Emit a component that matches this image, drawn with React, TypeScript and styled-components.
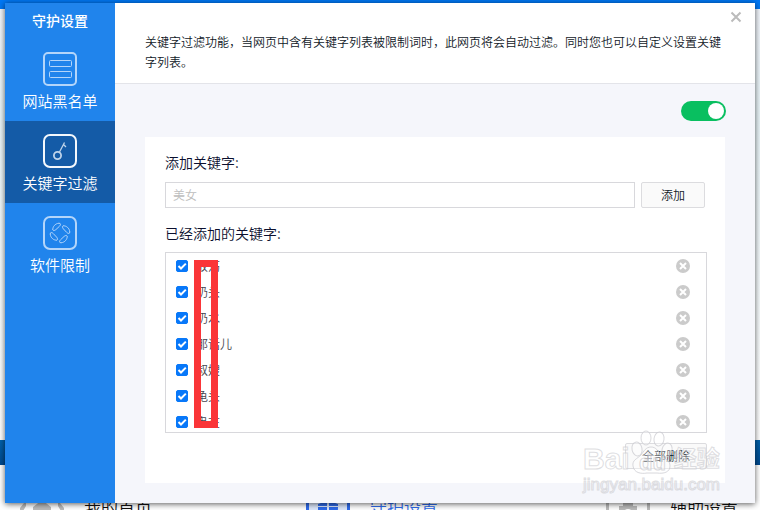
import React, { useState } from "react";
import styled, { createGlobalStyle } from "styled-components";

const GlobalStyle = createGlobalStyle`
  * { box-sizing: border-box; }
  body {
    margin: 0;
    background: #fff;
    font-family: "Noto Sans CJK SC", sans-serif;
    font-weight: 350;
    font-size: 12px;
    line-height: 20px;
    color: #111827;
  }
  button, input { font: inherit; color: inherit; margin: 0; }
`;

const Page = styled.div`
  position: relative;
  display: flex;
  min-height: 100vh;
  overflow: hidden;
`;

const Backdrop = styled.div`
  position: absolute;
  inset: 0;
  display: grid;
  grid-template-rows: 9px 1fr 25px 45px;
  overflow: hidden;
  background: #fff;
`;

const TopBar = styled.div`
  background: #0078f5;
`;

const BackdropBody = styled.div`
  background: linear-gradient(#f2f6fc, #e8f4f8 25%, #f4fafc 60%, #fff);
`;

const Band = styled.div`
  background: linear-gradient(#0262ac, #00498f);
`;

const BackNav = styled.nav`
  display: grid;
  grid-template-columns: 286fr 300fr 154fr;
  align-items: start;
  padding: 29px 0 0 20px;
`;

const BackLink = styled.a<{ $active?: boolean }>`
  display: flex;
  align-items: center;
  gap: 20px;
  height: 26px;
  font-size: 17px;
  white-space: nowrap;
  text-decoration: none;
  color: ${(p) => (p.$active ? "#2f6bea" : "#111")};
  svg { flex: none; }
`;

const Dialog = styled.section`
  position: relative;
  flex: 1;
  display: flex;
  min-width: 0;
  margin: 3px 5px 7px;
  background: #f5f6fb;
  box-shadow: 0 1px 6px rgba(0, 0, 0, 0.65);
`;

const Sidebar = styled.aside`
  flex: 0 0 110px;
  background: #2084ec;
  color: #fff;
`;

const Title = styled.h1`
  margin: 0;
  padding-bottom: 2px;
  font-size: 14px;
  line-height: 34px;
  font-weight: 500;
  text-align: center;
`;

const Tab = styled.button<{ $active?: boolean }>`
  display: flex;
  flex-direction: column;
  align-items: center;
  gap: 5px;
  width: 100%;
  height: 82px;
  padding: 13px 0 0;
  border: 0;
  background: ${(p) => (p.$active ? "#145ba7" : "transparent")};
  font-size: 15px;
  line-height: 20px;
  cursor: pointer;
  svg { color: ${(p) => (p.$active ? "#f3f8fd" : "#b3d5fa")}; }
`;

const Content = styled.main`
  flex: 1;
  min-width: 0;
`;

const Header = styled.header`
  position: relative;
  padding: 29px 30px 11px;
  background: #fff;
  border-bottom: 1px solid #e3e4e9;
`;

const Description = styled.p`
  margin: 0;
  min-height: 40px;
`;

const CloseButton = styled.button`
  position: absolute;
  top: 8px;
  right: 13px;
  display: grid;
  padding: 0;
  border: 0;
  background: none;
  color: #bbb;
  cursor: pointer;
`;

const ToggleRow = styled.div`
  display: flex;
  justify-content: flex-end;
  padding: 17px 29px 16px;
`;

const Toggle = styled.input`
  appearance: none;
  display: flex;
  align-items: center;
  width: 45px;
  height: 20px;
  padding: 0 2px;
  border-radius: 10px;
  background: #bbb;
  cursor: pointer;
  &::before {
    content: "";
    width: 16px;
    height: 16px;
    border-radius: 50%;
    background: #fff;
  }
  &:checked { background: #09bf60; justify-content: flex-end; }
`;

const Panel = styled.div`
  margin: 0 30px 20px;
  padding: 15px 20px 14px;
  background: #fff;
`;

const FieldLabel = styled.label`
  display: block;
  font-size: 14px;
  line-height: 20px;
  color: #0b0f2e;
`;

const ListTitle = styled.h2`
  margin: 15px 0 9px;
  font-size: 14px;
  line-height: 20px;
  font-weight: 350;
  color: #0b0f2e;
`;

const AddRow = styled.div`
  display: flex;
  gap: 6px;
  margin-top: 10px;
`;

const KeywordInput = styled.input`
  flex: 1;
  min-width: 0;
  height: 26px;
  padding: 0 7px 2px;
  border: 1px solid #d8d8dc;
  background: #fff;
  outline: none;
  &::placeholder { color: #bdbdbd; opacity: 1; }
`;

const PlainButton = styled.button<{ $wide?: boolean }>`
  flex: none;
  width: ${(p) => (p.$wide ? "82px" : "64px")};
  height: 26px;
  padding: 0;
  border: 1px solid #dcdcdf;
  border-radius: 2px;
  background: #fafafa;
  line-height: 20px;
  cursor: pointer;
`;

const ListFrame = styled.div`
  position: relative;
  margin-right: -2px;
`;

const KeywordList = styled.ul`
  height: 181px;
  margin: 0;
  padding: 0;
  overflow: hidden;
  border: 1px solid #d8d8dc;
  list-style: none;
`;

const KeywordRow = styled.li`
  display: flex;
  align-items: center;
  justify-content: space-between;
  height: 26px;
  padding: 0 16px 0 10px;
`;

const KeywordLabel = styled.label`
  display: flex;
  align-items: center;
  gap: 8px;
  color: #45454d;
`;

const TickWrap = styled.span`
  display: grid;
  place-items: center;
  > * { grid-area: 1 / 1; }
  svg { pointer-events: none; }
`;

const Tick = styled.input`
  appearance: none;
  width: 12px;
  height: 12px;
  border: 1px solid #0878f9;
  border-radius: 2px;
  &:checked { background: #0878f9; }
`;

const RemoveButton = styled.button`
  display: grid;
  padding: 0;
  border: 0;
  background: none;
  cursor: pointer;
`;

const RedMark = styled.div`
  position: absolute;
  left: 29px;
  top: 8px;
  width: 24px;
  height: 168px;
  border: 7px solid #fa3538;
`;

const Actions = styled.div`
  display: flex;
  justify-content: flex-end;
  margin: 10px -2px 0 0;
`;

const Watermark = styled.div`
  position: absolute;
  right: 34px;
  bottom: 9px;
  width: 138px;
  color: rgba(255, 255, 255, 0.4);
  font-family: "Liberation Sans", "Noto Sans CJK SC", sans-serif;
  font-weight: 700;
  white-space: nowrap;
  -webkit-text-stroke: 1px rgba(200, 200, 205, 0.6);
  pointer-events: none;
`;

const WatermarkLogo = styled.div`
  display: flex;
  align-items: flex-end;
  height: 48px;
  font-size: 30px;
  line-height: 34px;
  svg { flex: none; }
`;

const WatermarkCjk = styled.span`
  font-size: 23px;
`;

const WatermarkUrl = styled.div`
  font-size: 17px;
  line-height: 18px;
  font-weight: 400;
`;

const SheetIcon = () => (
  <svg width="34" height="34" viewBox="0 0 34 34" fill="none" stroke="currentColor" aria-hidden="true">
    <rect x="1" y="1" width="32" height="32" rx="4" strokeWidth="2" />
    <rect x="6.500" y="8.500" width="22" height="6" rx="1" />
    <rect x="6.500" y="19.500" width="22" height="6" rx="1" />
  </svg>
);

const KeyIcon = () => (
  <svg width="34" height="34" viewBox="0 0 34 34" fill="none" stroke="currentColor" aria-hidden="true">
    <rect x="1" y="1" width="32" height="32" rx="6" strokeWidth="2" />
    <g stroke="#bfd4ea">
      <circle cx="14.500" cy="21.500" r="3.600" strokeWidth="1.800" />
      <path d="M16.500 18 21.500 8.500M20.500 10.500l2.500 2.500" strokeWidth="1.300" />
    </g>
  </svg>
);

const ApertureIcon = () => (
  <svg width="34" height="34" viewBox="0 0 34 34" fill="none" stroke="currentColor" aria-hidden="true">
    <rect x="1" y="1" width="32" height="32" rx="6" strokeWidth="2" />
    {[0, 90, 180, 270].map((angle) => (
      <path
        key={angle}
        d="M9.800 14C9.500 11 12 7.500 16 7.200C18 7.200 17.800 9 16.500 10.200L13 13.500C12 14.500 10.200 15 9.800 14Z"
        transform={`rotate(${angle} 17 17)`}
      />
    ))}
  </svg>
);

const CloseIcon = () => (
  <svg width="12" height="12" viewBox="0 0 12 12" stroke="currentColor" strokeWidth="2" aria-hidden="true">
    <path d="m1.500 1.500 9 9m0-9-9 9" />
  </svg>
);

const RemoveIcon = () => (
  <svg width="14" height="14" viewBox="0 0 14 14" aria-hidden="true">
    <circle cx="7" cy="7" r="7" fill="#cbcbcb" />
    <path d="m4 4 6 6m0-6-6 6" stroke="#fff" strokeWidth="2" />
  </svg>
);

const TickIcon = () => (
  <svg width="12" height="12" viewBox="0 0 12 12" fill="none" stroke="#fff" strokeWidth="2" aria-hidden="true">
    <path d="m2.500 6 2.500 2.500L9.800 3.600" />
  </svg>
);

const HomeIcon = () => (
  <svg width="44" height="26" viewBox="0 0 44 26" fill="#bbb" aria-hidden="true">
    <path d="M22 6 31 13V26H13V13ZM0 17h3l3-5V9H4L0 14ZM44 17h-3l-3-5V9h2l4 5Z" />
  </svg>
);

const ShieldIcon = () => (
  <svg width="44" height="26" viewBox="0 0 44 26" aria-hidden="true">
    <path d="M0 0h44v26H0z" fill="#dce7fc" />
    <path d="M1.500 0v26M42.500 0v26" stroke="#2f6bea" strokeWidth="3" />
    <path d="M12 10q4-2 9-2v4h-9Zm11-2q5 0 9 2v2h-9ZM12 13h9v13h-7q-2-4-2-11Zm11 0h9q0 7-2 13h-7Z" fill="#2f6bea" />
  </svg>
);

const CameraIcon = () => (
  <svg width="44" height="26" viewBox="0 0 44 26" aria-hidden="true">
    <path d="M1.500 0v26M42.500 0v26" stroke="#bbb" strokeWidth="3" />
    <path d="M17 9h10v3h4v14H13V12h4Z" fill="#bbb" />
    <circle cx="22" cy="19" r="4" fill="#fff" />
  </svg>
);

const Paw = () => (
  <svg
    width="44"
    height="46"
    viewBox="0 0 44 46"
    fill="rgba(255,255,255,.35)"
    stroke="rgba(200,200,205,.7)"
    aria-hidden="true"
  >
    <ellipse cx="7" cy="19" rx="5" ry="7" transform="rotate(-12 7 19)" />
    <ellipse cx="16" cy="8" rx="5" ry="7" />
    <ellipse cx="29" cy="9" rx="5" ry="7" transform="rotate(8 29 9)" />
    <ellipse cx="37" cy="20" rx="5" ry="7" transform="rotate(14 37 20)" />
    <path d="M21 17c-5 0-7 4-10 8-4 4-9 5-8 11 1 7 8 8 14 7h10c7 1 13-1 13-7 0-6-5-7-9-11-3-4-5-8-10-8Z" />
    <text x="9" y="40" fontSize="22">du</text>
  </svg>
);

const tabs = [
  { name: "网站黑名单", icon: <SheetIcon /> },
  { name: "关键字过滤", icon: <KeyIcon /> },
  { name: "软件限制", icon: <ApertureIcon /> },
];

const keywords = ["放荡", "奶头", "奶水", "那话儿", "叔嫂", "龟头", "鬼在"];

export default function App() {
  const [tab, setTab] = useState("关键字过滤");
  return (
    <Page>
      <GlobalStyle />
      <Backdrop>
        <TopBar />
        <BackdropBody />
        <Band />
        <BackNav>
          <BackLink href="#home"><HomeIcon />我的首页</BackLink>
          <BackLink href="#guard" $active><ShieldIcon />守护设置</BackLink>
          <BackLink href="#assist"><CameraIcon />辅助设置</BackLink>
        </BackNav>
      </Backdrop>
      <Dialog aria-label="守护设置">
        <Sidebar>
          <Title>守护设置</Title>
          {tabs.map((t) => (
            <Tab key={t.name} $active={t.name === tab} onClick={() => setTab(t.name)}>
              {t.icon}
              {t.name}
            </Tab>
          ))}
        </Sidebar>
        <Content>
          <Header>
            <Description>
              关键字过滤功能，当网页中含有关键字列表被限制词时，此网页将会自动过滤。同时您也可以自定义设置关键字列表。
            </Description>
            <CloseButton aria-label="关闭"><CloseIcon /></CloseButton>
          </Header>
          <ToggleRow>
            <Toggle type="checkbox" role="switch" aria-label="关键字过滤" defaultChecked />
          </ToggleRow>
          <Panel>
            <FieldLabel htmlFor="keyword">添加关键字:</FieldLabel>
            <AddRow>
              <KeywordInput id="keyword" placeholder="美女" />
              <PlainButton>添加</PlainButton>
            </AddRow>
            <ListTitle>已经添加的关键字:</ListTitle>
            <ListFrame>
              <KeywordList>
                {keywords.map((word) => (
                  <KeywordRow key={word}>
                    <KeywordLabel>
                      <TickWrap>
                        <Tick type="checkbox" defaultChecked />
                        <TickIcon />
                      </TickWrap>
                      {word}
                    </KeywordLabel>
                    <RemoveButton aria-label={`删除 ${word}`}><RemoveIcon /></RemoveButton>
                  </KeywordRow>
                ))}
              </KeywordList>
              <RedMark />
            </ListFrame>
            <Actions>
              <PlainButton $wide>全部删除</PlainButton>
            </Actions>
          </Panel>
        </Content>
        <Watermark aria-hidden="true">
          <WatermarkLogo>
            Bai
            <Paw />
            <WatermarkCjk>经验</WatermarkCjk>
          </WatermarkLogo>
          <WatermarkUrl>jingyan.baidu.com</WatermarkUrl>
        </Watermark>
      </Dialog>
    </Page>
  );
}
